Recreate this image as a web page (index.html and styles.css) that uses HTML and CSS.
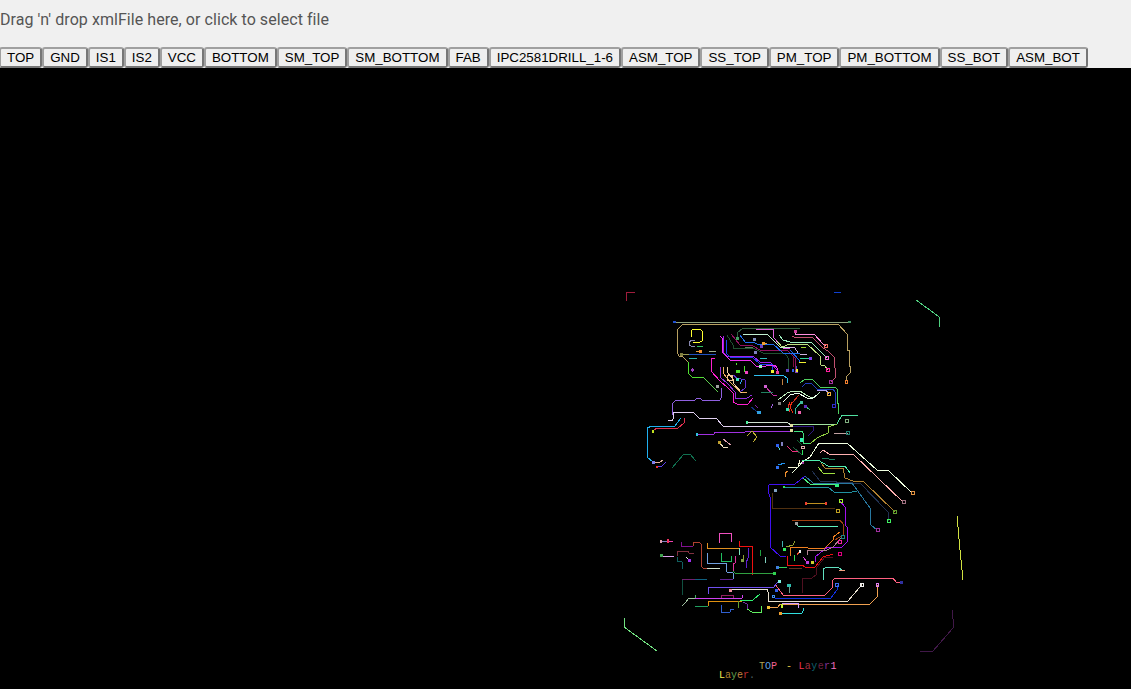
FILE: index.html
```html
<!DOCTYPE html>
<html lang="en">
<head>
<meta charset="utf-8">
<title>Gerber viewer</title>
<link rel="stylesheet" href="styles.css">
</head>
<body>
<div class="dropzone">Drag 'n' drop xmlFile here, or click to select file</div>
<div class="layers">
<button class="layer">TOP</button><button class="layer">GND</button><button class="layer">IS1</button><button class="layer">IS2</button><button class="layer">VCC</button><button class="layer">BOTTOM</button><button class="layer">SM_TOP</button><button class="layer">SM_BOTTOM</button><button class="layer">FAB</button><button class="layer">IPC2581DRILL_1-6</button><button class="layer">ASM_TOP</button><button class="layer">SS_TOP</button><button class="layer">PM_TOP</button><button class="layer">PM_BOTTOM</button><button class="layer">SS_BOT</button><button class="layer">ASM_BOT</button>
</div>
<svg class="board" viewBox="0 68 1131 621" width="1131" height="621" xmlns="http://www.w3.org/2000/svg">
<polyline stroke="#a01c3c" points="626,301 626,292 635,292"/>
<polyline stroke="#1040d0" points="834,292 841,292"/>
<polyline stroke="#50d080" points="916,300 938,316 939,317 939,327"/>
<polyline stroke="#d0e040" points="957,516 960,550 963,580"/>
<polyline stroke="#70e080" points="624,618 624,627 657,651"/>
<polyline stroke="#401848" points="952,610 952,618 953,619 953,628 933,651 920,651"/>
<polyline stroke="#8fa37f" points="674,322 851,322"/>
<polyline stroke="#b8a060" points="688,362 682,356 679,356 677,352 677,330 683,324 838,324 847,334 847,350 849,350 849,366 850,366 850,373 846,377 846,381"/>
<polyline stroke="#9a9a50" points="681,354 689,354"/>
<polyline stroke="#2050c0" points="689,354 716,354"/>
<polyline stroke="#ffff30" points="691,337 691,331 693,329 700,329 702,331 702,341 700,342 693,342"/>
<polyline stroke="#8888b0" points="695,340 692,340 689,342 689,345 691,346 695,346"/>
<polyline stroke="#30c060" points="697,346 703,346"/>
<polyline stroke="#e0a040" points="696,351 702,351"/>
<polyline stroke="#a0b090" points="709,351 716,351"/>
<polyline stroke="#30b0b0" points="689,358 697,358"/>
<polyline stroke="#50e030" points="688,362 688,373 692,377 703,377"/>
<polyline stroke="#60d050" points="703,377 718,392"/>
<polyline stroke="#a040c0" points="692,368 692,372"/>
<polyline stroke="#ff20d0" points="715,358 711,359 711,371 720,381 728,388 733,393 733,402 737,404 748,404 753,398"/>
<polyline stroke="#9060e0" points="672,415 672,404 676,400 695,400 697,398 700,398 702,400 720,400 721,398 721,388"/>
<polyline stroke="#2f5f3f" points="800,328 743,328 737,333 737,338"/>
<polyline stroke="#e060e0" points="756,329 773,329 774,338 783,348 790,348"/>
<polyline stroke="#c0f0d0" points="743,334 767,334 780,347 790,347"/>
<polyline stroke="#ff90e0" points="795,332 795,334 814,334 823,344 826,346"/>
<polyline stroke="#c05070" points="792,336 794,337 812,337 823,348 828,351 834,357 834,367 835,368 835,378 833,380 831,382"/>
<polyline stroke="#a0f0c0" points="779,335 783,340 790,342 811,342 813,344 825,356 827,358"/>
<polyline stroke="#c0e080" points="777,341 782,347 790,344 807,344 820,356 821,365 825,366 828,370"/>
<polyline stroke="#d0b0e0" points="790,347 795,348 798,353 800,354 807,354"/>
<polyline stroke="#a0d030" points="801,347 806,347"/>
<polyline stroke="#30d0a0" points="800,358 810,358"/>
<polyline stroke="#f0f030" points="799,362 806,362"/>
<polyline stroke="#2060f0" points="790,350 799,360 799,362"/>
<polyline stroke="#801040" points="793,357 793,367"/>
<polyline stroke="#4060c0" points="796,366 796,372"/>
<polyline stroke="#a020f0" points="723,336 723,352 727,356 753,356 760,362 770,362 777,370"/>
<polyline stroke="#2040f0" points="726,340 726,353 730,357 752,357 760,364 772,364 773,372"/>
<polyline stroke="#f030f0" points="720,336 722,338 722,352 730,360 750,360 757,367 775,365 777,368 777,373"/>
<polyline stroke="#205030" points="727,335 733,345 733,348 753,348 763,353 785,353 788,358 788,370"/>
<polyline stroke="#901060" points="731,334 740,345 753,346 760,350 787,350 795,358 796,372"/>
<polyline stroke="#2070f0" points="740,335 745,342 753,342 757,344 773,344 783,353 800,353"/>
<polyline stroke="#608060" points="745,347 753,347"/>
<polyline stroke="#f0a040" points="762,343 767,343"/>
<polyline stroke="#30c0c0" points="760,358 767,358"/>
<polyline stroke="#30c0f0" points="754,375 783,375 787,378 787,383"/>
<polyline stroke="#c08040" points="782,379 783,385"/>
<polyline stroke="#f0b060" points="723,367 723,373 730,382 740,392 747,393"/>
<polyline stroke="#f0d0a0" points="727,367 727,372 733,379 733,383 742,393"/>
<circle stroke="#f0c090" cx="730" cy="378" r="3"/>
<polyline stroke="#9030e0" points="720,367 720,377 728,384 735,392 735,398 747,398 752,395"/>
<polyline stroke="#6030d0" points="733,375 737,378 745,380 745,388 740,392"/>
<polyline stroke="#50e030" points="736,363 737,365"/>
<polyline stroke="#50e030" points="744,366 744,372"/>
<polyline stroke="#30a0f0" points="742,380 740,384"/>
<polyline stroke="#103080" points="751,407 759,413"/>
<polyline stroke="#8020a0" points="755,405 758,408"/>
<polyline stroke="#c030a0" points="765,386 773,395 777,395"/>
<polyline stroke="#208060" points="761,392 773,392"/>
<polyline stroke="#a060e0" points="771,408 773,404"/>
<polyline stroke="#50d060" points="800,383 805,379 812,379 820,387 835,387 837,389 837,403 838,403 838,414"/>
<polyline stroke="#2040c0" points="802,387 806,383 811,383 817,389 833,389 835,392 835,406"/>
<polyline stroke="#b0a0f0" points="817,390 826,390 829,394"/>
<polyline stroke="#c0f0c0" points="778,400 787,393 793,391 800,391 806,395 810,397 815,397 820,392"/>
<polyline stroke="#f0fff0" points="783,402 790,395 798,393 807,398 813,398 817,395"/>
<polyline stroke="#d03020" points="799,395 793,402 791,403"/>
<polyline stroke="#f03010" points="792,402 790,407 793,413"/>
<polyline stroke="#e03020" points="790,402 788,407 790,412"/>
<polyline stroke="#30c0a0" points="801,402 796,408 795,414"/>
<polyline stroke="#40c080" points="805,406 810,410"/>
<polyline stroke="#e0d0f0" points="668,420 672,421 673,419 674,412 693,412 699,418 716,418 723,426 790,426"/>
<polyline stroke="#d0e0d0" points="747,422 787,422 792,426"/>
<polyline stroke="#a030e0" points="697,434 714,434 715,432 745,432 747,431 790,431 793,431"/>
<polyline stroke="#301880" points="790,426 813,426 814,430 808,436"/>
<polyline stroke="#20b0f0" points="681,418 675,426 652,426 647,428 647,457 653,462"/>
<polyline stroke="#e03050" points="684,418 684,423 678,428 657,428 653,431"/>
<polyline stroke="#e0b0a0" points="653,462 660,462 663,460"/>
<polyline stroke="#6040f0" points="657,467 662,466 666,462"/>
<polyline stroke="#107050" points="672,468 684,454 690,454 696,461"/>
<polyline stroke="#c0b030" points="747,436 752,431 757,437 753,442"/>
<polyline stroke="#f0e0c0" points="720,443 723,447 728,447"/>
<polyline stroke="#e0a0b0" points="723,439 731,445"/>
<polyline stroke="#40e080" points="794,431 802,431 803,433 803,443 810,444"/>
<polyline stroke="#90d040" points="810,444 817,438 828,433 828,427 837,424"/>
<polyline stroke="#50e0a0" points="837,424 842,415 858,415"/>
<polyline stroke="#a0e0a0" points="793,424 835,424"/>
<polyline stroke="#c0a0a0" points="834,433 848,433"/>
<polyline stroke="#106030" points="797,440 802,445"/>
<polyline stroke="#206040" points="793,447 802,455"/>
<polyline stroke="#30e060" points="802,450 802,455"/>
<polyline stroke="#f03080" points="787,446 792,451 798,451"/>
<polyline stroke="#50d0d0" points="777,445 780,450"/>
<polyline stroke="#2090f0" points="778,465 785,463"/>
<polyline stroke="#f09030" points="788,471 785,473 785,477"/>
<polyline stroke="#f0f0d0" points="788,467 798,467 800,460"/>
<polyline stroke="#f0ffe0" points="792,473 800,465 802,462 810,457 819,443 847,443 877,470 888,470 912,493"/>
<polyline stroke="#ffb0b0" points="820,453 823,450 829,454 853,454 903,502"/>
<polyline stroke="#208060" points="822,458 835,460"/>
<polyline stroke="#50f0b0" points="802,460 818,460 828,466 845,466 850,473"/>
<polyline stroke="#a0e040" points="818,467 823,473 835,473"/>
<polyline stroke="#b08030" points="821,463 825,468 843,468 845,478 853,481 863,481 895,512"/>
<polyline stroke="#203050" points="812,471 820,481 853,483 860,483 888,512 888,521"/>
<polyline stroke="#2878a0" points="805,476 813,483 852,483 870,508 871,525 877,530"/>
<polyline stroke="#4010f0" points="805,476 795,484 770,484 768,486 768,491 770,497 770,547 780,556 786,556"/>
<polyline stroke="#2090a0" points="783,487 828,487 834,492 852,492 857,491"/>
<polyline stroke="#50f080" points="803,478 810,484 836,485"/>
<polyline stroke="#a010f0" points="840,501 845,507 845,525 847,527 847,542 842,547 828,547 820,553 815,557 815,562"/>
<polyline stroke="#503010" points="772,493 772,508 835,508"/>
<polyline stroke="#c09020" points="805,503 826,503"/>
<polyline stroke="#a04010" points="792,520 795,520 840,520 843,524 843,535 835,540"/>
<polyline stroke="#60f0c0" points="796,523 798,526 838,526"/>
<polyline stroke="#f08020" points="840,532 833,537 833,540 825,548 808,548 807,547 791,547 790,550 790,556"/>
<polyline stroke="#b08090" points="807,555 808,550 827,550 833,547 842,537"/>
<polyline stroke="#f01010" points="833,554 823,557 815,567 805,567 802,565 787,565 787,556"/>
<polyline stroke="#501020" points="833,557 825,557 817,567 816,575 812,578 803,578 802,593"/>
<polyline stroke="#90a030" points="786,547 793,545 795,541"/>
<polyline stroke="#40b0b0" points="782,541 782,547"/>
<polyline stroke="#f05030" points="800,551 797,555"/>
<polyline stroke="#30e050" points="794,555 794,561"/>
<polyline stroke="#e040d0" points="803,557 807,562"/>
<polyline stroke="#30d060" points="777,567 787,567"/>
<polyline stroke="#603020" points="789,568 802,568"/>
<polyline stroke="#20b040" points="760,573 775,573"/>
<polyline stroke="#80d0c0" points="765,557 765,563"/>
<polyline stroke="#20a040" points="760,550 760,556"/>
<polyline stroke="#60e0c0" points="823,580 823,569 827,567 838,567 842,570"/>
<polyline stroke="#f0a080" points="839,570 845,570"/>
<polyline stroke="#ff6080" points="775,584 783,595 825,595 832,588 833,580 835,578 893,578 896,582 902,582"/>
<polyline stroke="#1030e0" points="773,597 775,598 831,598 837,590 837,585"/>
<polyline stroke="#e8e0d0" points="730,589 767,589 768,592 768,601 848,601 860,587 862,584"/>
<polyline stroke="#f0a050" points="768,607 778,607 780,604 870,604 877,597 877,585"/>
<polyline stroke="#d0a0ff" points="782,603 798,603 798,608"/>
<polyline stroke="#30e0e0" points="780,613 802,613 803,611 803,608"/>
<polyline stroke="#7050f0" points="708,594 708,588 710,587 774,587 777,583 780,581"/>
<polyline stroke="#70a090" points="789,585 789,593"/>
<polyline stroke="#8080c0" points="661,541 668,541"/>
<polyline stroke="#f040b0" points="668,541 673,541"/>
<polyline stroke="#e0a0f0" points="662,556 674,556"/>
<polyline stroke="#801090" points="681,542 681,546 693,546"/>
<polyline stroke="#b04030" points="693,546 694,542 699,542 701,544 701,566 703,568 707,568"/>
<polyline stroke="#d0e0d0" points="707,568 720,568"/>
<polyline stroke="#803040" points="677,556 677,551 688,551 689,553 694,553"/>
<polyline stroke="#106060" points="677,557 677,561 682,562 682,569"/>
<polyline stroke="#f0f0f0" points="686,557 689,560"/>
<polyline stroke="#f050c0" points="719,543 719,533 731,533 731,542"/>
<polyline stroke="#e09020" points="707,543 707,548 739,548"/>
<polyline stroke="#80e0c0" points="739,548 739,555"/>
<polyline stroke="#f01010" points="739,541 739,546 752,546 752,575"/>
<polyline stroke="#70a0e0" points="707,553 707,563 726,563 727,572 733,573 733,579"/>
<polyline stroke="#20c060" points="721,553 721,561 731,561 731,556"/>
<polyline stroke="#e030a0" points="735,556 735,563 733,564 733,571"/>
<polyline stroke="#30a040" points="733,571 735,573 775,573"/>
<polyline stroke="#90a030" points="743,555 743,560 741,561"/>
<polyline stroke="#6020d0" points="748,548 748,558 746,563 747,568"/>
<polyline stroke="#105040" points="682,595 682,580"/>
<polyline stroke="#702070" points="682,580 695,579"/>
<polyline stroke="#106080" points="695,579 707,579"/>
<polyline stroke="#602090" points="720,579 733,579"/>
<polyline stroke="#902060" points="721,598 721,595 733,595 733,598"/>
<polyline stroke="#d040f0" points="695,598 742,598 743,595"/>
<polyline stroke="#a0c0a0" points="682,606 685,603 689,598 695,598"/>
<polyline stroke="#40b060" points="695,595 695,598"/>
<polyline stroke="#20a060" points="695,606 708,606"/>
<polyline stroke="#e09010" points="708,606 708,601 742,601"/>
<polyline stroke="#3060d0" points="721,605 721,612 730,612 731,609 734,609"/>
<polyline stroke="#60a030" points="738,601 738,608"/>
<polyline stroke="#30f070" points="740,600 753,600 760,594"/>
<polyline stroke="#7030a0" points="743,602 747,604 747,609"/>
<polyline stroke="#60f060" points="747,609 752,612 761,612 761,606"/>
<g class="pads">
<rect fill="#2050d0" x="673" y="321" width="3" height="2"/>
<rect fill="#409060" x="848" y="321" width="3" height="2"/>
<rect fill="#808040" x="680" y="353" width="3" height="3"/>
<rect fill="#f09030" x="699" y="350" width="3" height="3"/>
<rect fill="#a040c0" x="691" y="369" width="3" height="2"/>
<rect fill="#40a060" x="736" y="337" width="3" height="3"/>
<rect fill="#8090c0" x="753" y="338" width="3" height="3"/>
<rect fill="#7040c0" x="760" y="345" width="3" height="3"/>
<rect fill="#8080c0" x="754" y="351" width="3" height="3"/>
<rect fill="#d040a0" x="794" y="330" width="3" height="3"/>
<rect fill="#f0a030" x="762" y="342" width="3" height="3"/>
<rect fill="#a0f0c0" x="759" y="365" width="3" height="3"/>
<rect fill="#f0f030" x="771" y="370" width="3" height="3"/>
<rect fill="#f040a0" x="776" y="371" width="3" height="3"/>
<rect fill="#6040c0" x="786" y="369" width="3" height="3"/>
<rect fill="#8040c0" x="795" y="370" width="3" height="3"/>
<rect fill="#3060f0" x="792" y="369" width="2" height="3"/>
<rect fill="#f0f030" x="796" y="369" width="2" height="3"/>
<rect fill="#8040f0" x="809" y="357" width="3" height="3"/>
<rect fill="#50e030" x="736" y="370" width="4" height="3"/>
<rect fill="#f040c0" x="745" y="371" width="3" height="3"/>
<rect fill="#40e0c0" x="736" y="378" width="3" height="3"/>
<rect fill="#30a0e0" x="757" y="411" width="4" height="3"/>
<rect fill="#d060d0" x="764" y="385" width="3" height="3"/>
<rect fill="#808080" x="778" y="402" width="3" height="3"/>
<rect fill="#a0a0a0" x="716" y="385" width="3" height="3"/>
<rect fill="#40c0a0" x="800" y="401" width="3" height="3"/>
<rect fill="#30e0b0" x="786" y="408" width="3" height="3"/>
<rect fill="#6030c0" x="804" y="405" width="3" height="3"/>
<rect fill="#f060b0" x="798" y="411" width="3" height="3"/>
<rect fill="#c0e020" x="652" y="430" width="2" height="3"/>
<rect fill="#c0a030" x="718" y="441" width="3" height="3"/>
<rect fill="#e0e0a0" x="790" y="424" width="3" height="3"/>
<rect fill="#e0e0a0" x="790" y="429" width="3" height="3"/>
<rect fill="#8080f0" x="652" y="461" width="3" height="3"/>
<rect fill="#f03030" x="656" y="466" width="2" height="2"/>
<rect fill="#30c0e0" x="696" y="433" width="2" height="3"/>
<rect fill="#50f0a0" x="746" y="421" width="2" height="3"/>
<rect fill="#30f0b0" x="800" y="438" width="3" height="4"/>
<rect fill="#3060f0" x="776" y="444" width="3" height="3"/>
<rect fill="#8080c0" x="781" y="442" width="2" height="4"/>
<rect fill="#3070f0" x="776" y="466" width="3" height="3"/>
<rect fill="#a030a0" x="802" y="462" width="2" height="2"/>
<rect fill="#30e060" x="783" y="486" width="2" height="2"/>
<rect fill="#80a0c0" x="774" y="489" width="3" height="3"/>
<rect fill="#30f080" x="835" y="484" width="4" height="3"/>
<rect fill="#f04030" x="805" y="502" width="2" height="3"/>
<rect fill="#f04030" x="825" y="502" width="2" height="3"/>
<rect fill="#a0a0a0" x="795" y="522" width="3" height="3"/>
<rect fill="#30f060" x="783" y="548" width="3" height="3"/>
<rect fill="#d0d030" x="811" y="561" width="3" height="3"/>
<rect fill="#c040e0" x="806" y="561" width="3" height="3"/>
<rect fill="#f0f0f0" x="799" y="550" width="2" height="3"/>
<rect fill="#4080e0" x="776" y="566" width="3" height="3"/>
<rect fill="#30d050" x="773" y="572" width="3" height="3"/>
<rect fill="#e0a0b0" x="660" y="540" width="2" height="3"/>
<rect fill="#f03060" x="667" y="539" width="2" height="4"/>
<rect fill="#40a050" x="660" y="554" width="3" height="3"/>
<rect fill="#a030f0" x="688" y="559" width="3" height="3"/>
<rect fill="#80a040" x="741" y="559" width="3" height="3"/>
<rect fill="#f090a0" x="729" y="589" width="3" height="3"/>
<rect fill="#3060f0" x="775" y="589" width="3" height="3"/>
<rect fill="#80f0e0" x="778" y="580" width="3" height="3"/>
<rect fill="#30c0b0" x="787" y="584" width="4" height="3"/>
<rect fill="#f0c030" x="767" y="606" width="3" height="3"/>
<rect fill="#c0f030" x="781" y="604" width="2" height="4"/>
<rect fill="#f0a030" x="779" y="612" width="3" height="3"/>
<rect fill="#3030a0" x="900" y="581" width="3" height="3"/>
</g>
<g class="rings">
<rect stroke="#f07060" x="824" y="344" width="3" height="3"/>
<rect stroke="#f070d0" x="825" y="356" width="3" height="3"/>
<rect stroke="#ff20a0" x="826" y="368" width="3" height="3"/>
<rect stroke="#a030a0" x="829" y="380" width="3" height="3"/>
<rect stroke="#f08030" x="845" y="380" width="2" height="3"/>
<rect stroke="#f0b040" x="827" y="392" width="3" height="3"/>
<rect stroke="#3030d0" x="832" y="404" width="3" height="3"/>
<rect stroke="#80b080" x="845" y="419" width="3" height="3"/>
<rect stroke="#208070" x="846" y="431" width="3" height="3"/>
<rect stroke="#e0b0b0" x="801" y="446" width="3" height="2"/>
<rect stroke="#e09040" x="911" y="491" width="3" height="3"/>
<rect stroke="#a07080" x="902" y="500" width="3" height="3"/>
<rect stroke="#60a030" x="893" y="510" width="3" height="3"/>
<rect stroke="#40f060" x="887" y="519" width="3" height="3"/>
<rect stroke="#a030a0" x="876" y="528" width="3" height="3"/>
<rect stroke="#a0f030" x="839" y="499" width="3" height="3"/>
<rect stroke="#c0a020" x="836" y="509" width="3" height="3"/>
<rect stroke="#f020a0" x="838" y="540" width="3" height="3"/>
<rect stroke="#e00080" x="838" y="552" width="3" height="3"/>
<rect stroke="#208080" x="841" y="535" width="3" height="3"/>
<rect stroke="#4070f0" x="835" y="583" width="3" height="3"/>
<rect stroke="#f0f0f0" x="860" y="583" width="3" height="3"/>
<rect stroke="#e080f0" x="876" y="583" width="2" height="3"/>
<rect stroke="#4090f0" x="772" y="595" width="2" height="2"/>
</g>
<text class="label" x="759" y="669"><tspan fill="#b0a050">T</tspan><tspan fill="#60a0e0">O</tspan><tspan fill="#f06090">P</tspan></text>
<text class="label label-wide" x="786" y="669"><tspan fill="#e0c040">-</tspan><tspan dx="6" fill="#f03050">L</tspan><tspan fill="#a03040">a</tspan><tspan fill="#106070">y</tspan><tspan fill="#702040">e</tspan><tspan fill="#803090">r</tspan><tspan fill="#f070c0">1</tspan></text>
<text class="label" x="719" y="678"><tspan fill="#f0f050">L</tspan><tspan fill="#b08030">a</tspan><tspan fill="#60a050">y</tspan><tspan fill="#c08040">e</tspan><tspan fill="#c03030">r</tspan><tspan fill="#506060">.</tspan></text>
</svg>
</body>
</html>
```

FILE: styles.css
```css
html, body {
  margin: 0;
  padding: 0;
  background: #f0f0f0;
  overflow: hidden;
}

.dropzone {
  height: 47px;
  box-sizing: border-box;
  padding-top: 10px;
  font: 16px/19px Roboto, sans-serif;
  letter-spacing: 0.06px;
  color: #555;
}

.layers {
  display: flex;
  height: 21px;
  margin-left: -1px;
}

.layer {
  margin: 0;
  height: 21px;
  padding: 1px 6px;
  box-sizing: border-box;
  font: 13.333px "Liberation Sans", Arial, sans-serif;
  color: #000;
  background: #efefef;
  border: 2px solid;
  border-color: #a0a0a0 #767676 #767676 #a0a0a0;
  border-radius: 3px;
}

.board {
  display: block;
  background: #000;
}

.board polyline,
.board circle {
  fill: none;
  stroke-width: 1;
  shape-rendering: crispEdges;
}

.pads rect {
  shape-rendering: crispEdges;
}

.rings rect {
  fill: none;
  stroke-width: 1;
  shape-rendering: crispEdges;
}

.label {
  font: 10px "Liberation Mono", monospace;
}

.label-wide {
  letter-spacing: 0.4px;
}
```
